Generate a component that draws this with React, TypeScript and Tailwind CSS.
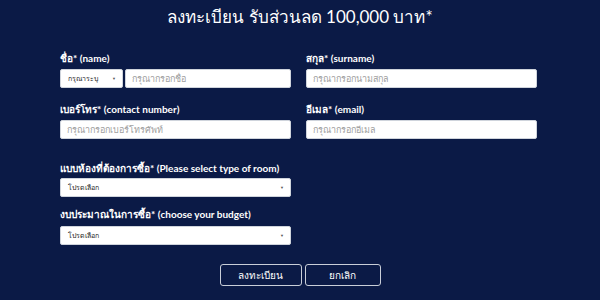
const font = { fontFamily: 'Lato, "Noto Sans", sans-serif' };

function Label({ children }: { children: React.ReactNode }) {
  return (
    <div className="h-[16px] flex items-center text-[10px] font-bold text-white whitespace-nowrap">
      {children}
    </div>
  );
}

function TextInput({ placeholder }: { placeholder: string }) {
  return (
    <input
      placeholder={placeholder}
      className="block h-[19px] w-full bg-white border border-[#cfd4dc] rounded-[2px] px-[6px] text-[9px] text-[#333] placeholder:text-[#a0a0a0] outline-none"
    />
  );
}

function SelectBox({ value, className }: { value: string; className?: string }) {
  return (
    <div
      className={`h-[19px] bg-white border border-[#cfd4dc] rounded-[2px] flex items-center justify-between pl-[7px] pr-[6px] ${className ?? ''}`}
    >
      <span className="text-[7px] leading-none text-[#222]">{value}</span>
      <span className="text-[4px] leading-none text-[#555]">▼</span>
    </div>
  );
}

export default function App() {
  return (
    <div className="w-[600px] h-[300px] bg-[#0b1a46] overflow-hidden" style={font}>
      <h1 className="h-[34px] flex items-center justify-center text-[17px] text-white font-normal">
        ลงทะเบียน รับส่วนลด 100,000 บาท*
      </h1>

      <div className="w-[477px] ml-[60px] mt-[16px]">
        <div className="grid grid-cols-2 gap-x-[15px]">
          <div>
            <Label>ชื่อ* (name)</Label>
            <div className="mt-[3px] flex gap-[2px]">
              <SelectBox value="กรุณาระบุ" className="w-[63px] shrink-0" />
              <TextInput placeholder="กรุณากรอกชื่อ" />
            </div>
          </div>
          <div>
            <Label>สกุล* (surname)</Label>
            <div className="mt-[3px]">
              <TextInput placeholder="กรุณากรอกนามสกุล" />
            </div>
          </div>

          <div className="mt-[13px]">
            <Label>เบอร์โทร* (contact number)</Label>
            <div className="mt-[3px]">
              <TextInput placeholder="กรุณากรอกเบอร์โทรศัพท์" />
            </div>
          </div>
          <div className="mt-[13px]">
            <Label>อีเมล* (email)</Label>
            <div className="mt-[3px]">
              <TextInput placeholder="กรุณากรอกอีเมล" />
            </div>
          </div>
        </div>

        <div className="w-[231px] mt-[21px]">
          <Label>แบบห้องที่ต้องการซื้อ* (Please select type of room)</Label>
          <SelectBox value="โปรดเลือก" className="mt-[2px]" />
        </div>

        <div className="w-[231px] mt-[9px]">
          <Label>งบประมาณในการซื้อ* (choose your budget)</Label>
          <SelectBox value="โปรดเลือก" className="mt-[4px]" />
        </div>
      </div>

      <div className="mt-[19px] flex justify-center gap-[3px]">
        <button className="w-[82px] h-[22px] border border-[#c9ced8] rounded-[3px] text-white text-[10px] leading-none">
          ลงทะเบียน
        </button>
        <button className="w-[76px] h-[22px] border border-[#c9ced8] rounded-[3px] text-white text-[10px] leading-none">
          ยกเลิก
        </button>
      </div>
    </div>
  );
}
